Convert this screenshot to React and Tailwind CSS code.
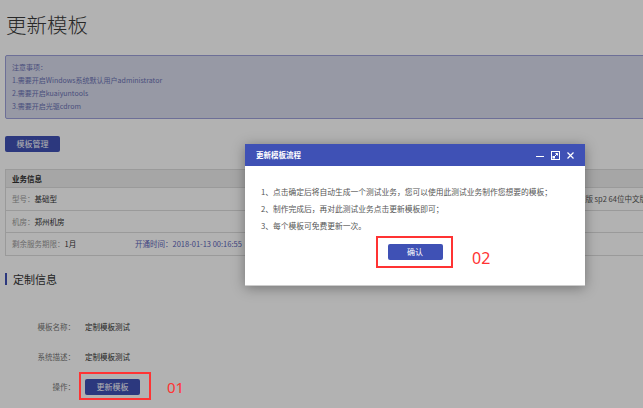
import React from "react";

const FormRow = ({ label, children }) => {
  return (
    <div className="flex items-center h-[30px]">
      <div className="w-[70px] text-right text-[7.5px] text-[#777]">{label}</div>
      <div className="ml-[10px] text-[7.5px] text-[#333]">{children}</div>
    </div>
  );
};

const MaxIcon = () => (
  <svg width="9" height="9" viewBox="0 0 9 9" fill="none" stroke="white" strokeWidth="1">
    <rect x="0.5" y="0.5" width="8" height="8" />
    <path d="M3 6 L6.5 2.5 M4.5 2.5 H6.5 V4.5" />
    <rect x="1.5" y="5" width="2.5" height="2.5" fill="white" stroke="none" />
  </svg>
);

const App = () => {
  return (
    <div className="relative w-[643px] h-[408px] overflow-hidden bg-white font-['Noto_Sans_CJK_SC','Noto_Sans',sans-serif]">
      {/* page */}
      <div className="w-[760px] pl-[5px] pt-[12px]">
        <h1 className="text-[20.5px] leading-[24px] font-light text-[#3a3a3a] pl-[1px]">更新模板</h1>

        <div className="mt-[19px] border border-[#9ca0d9] bg-[#d9dbec] rounded-[2px] px-[6px] py-[5px] text-[7px] leading-[13px] text-[#6a71b4]">
          <div>注意事项：</div>
          <div>1.需要开启Windows系统默认用户administrator</div>
          <div>2.需要开启kuaiyuntools</div>
          <div>3.需要开启光驱cdrom</div>
        </div>

        <button className="mt-[17px] w-[55px] h-[16px] rounded-[2px] bg-[#3f51b5] text-white text-[8px] leading-[16px] block">
          模板管理
        </button>

        <div className="mt-[17px] border border-[#ddd] text-[7.5px]">
          <div className="h-[18px] bg-[#eee] border-b border-[#ddd] px-[6px] flex items-center font-bold text-[#333]">
            业务信息
          </div>
          <div className="h-[23px] border-b border-[#ddd] px-[6px] flex items-center">
            <span className="text-[#999]">型号：</span>
            <span className="text-[#333]">基础型</span>
            <span className="ml-[389px] text-[#555]">操作系统：Windows Server 2008 R2 标准版 sp2 64位中文版</span>
          </div>
          <div className="h-[22px] border-b border-[#ddd] px-[6px] flex items-center">
            <span className="text-[#999]">机房：</span>
            <span className="text-[#333]">郑州机房</span>
          </div>
          <div className="h-[22px] px-[6px] flex items-center">
            <span className="w-[123px] shrink-0">
              <span className="text-[#999]">剩余服务期限：</span>
              <span className="text-[#333]">1月</span>
            </span>
            <span className="text-[#5a63b8]">开通时间：2018-01-13 00:16:55</span>
          </div>
        </div>

        <div className="mt-[15px] flex items-center h-[16px]">
          <div className="w-[2px] h-[12px] bg-[#3f51b5]"></div>
          <div className="ml-[6px] text-[11px] leading-[16px] text-[#333]">定制信息</div>
        </div>

        <div className="mt-[25px]">
          <FormRow label="模板名称：">定制模板测试</FormRow>
          <FormRow label="系统描述：">定制模板测试</FormRow>
          <FormRow label="操作：">
            <button className="w-[55px] h-[16px] rounded-[2px] bg-[#3f51b5] text-white text-[8px] leading-[16px] block">
              更新模板
            </button>
          </FormRow>
        </div>
      </div>

      {/* overlay */}
      <div className="absolute inset-0 bg-black/30"></div>

      {/* dialog */}
      <div className="absolute left-[245px] top-[144px] w-[340px] h-[142px] bg-white shadow-[0_2px_12px_rgba(0,0,0,0.35)] border-b border-[#ccc]">
        <div className="h-[22px] bg-[#3f51b5] flex items-center px-[11px]">
          <div className="text-[7.5px] font-bold text-white">更新模板流程</div>
          <div className="ml-auto flex items-center gap-[7px] text-white">
            <div className="w-[8px] h-[1px] bg-white mt-[2px]"></div>
            <MaxIcon />
            <svg width="7" height="7" viewBox="0 0 7 7" stroke="white" strokeWidth="1.2">
              <path d="M0.5 0.5 L6.5 6.5 M6.5 0.5 L0.5 6.5" />
            </svg>
          </div>
        </div>
        <div className="pt-[17px] pl-[16px] text-[7.75px] leading-[17px] text-[#555]">
          <div>1、点击确定后将自动生成一个测试业务，您可以使用此测试业务制作您想要的模板；</div>
          <div>2、制作完成后，再对此测试业务点击更新模板即可；</div>
          <div>3、每个模板可免费更新一次。</div>
        </div>
        <div className="mt-[10px] flex justify-center">
          <button className="w-[55px] h-[16px] rounded-[2px] bg-[#3f51b5] text-white text-[8px] leading-[16px]">
            确认
          </button>
        </div>
      </div>

      {/* annotations */}
      <div className="absolute left-[79px] top-[372px] w-[72px] h-[28px] border-2 border-[#f33]"></div>
      <div className="absolute left-[167px] top-[377px] text-[15px] leading-[20px] text-[#f33] font-['Noto_Sans',sans-serif]">01</div>
      <div className="absolute left-[376px] top-[236px] w-[77px] h-[32px] border-2 border-[#f33]"></div>
      <div className="absolute left-[472px] top-[247px] text-[16px] leading-[22px] text-[#f33] font-['Noto_Sans',sans-serif]">02</div>
    </div>
  );
};

export default App;
